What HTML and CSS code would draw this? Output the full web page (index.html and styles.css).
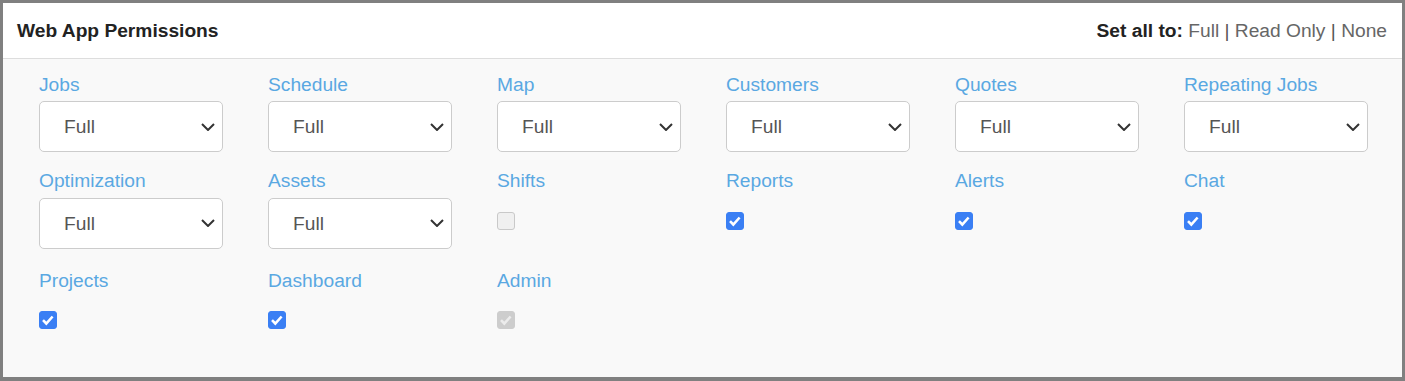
FILE: index.html
```html
<!DOCTYPE html>
<html lang="en">
<head>
    <meta charset="UTF-8">
    <meta name="viewport" content="width=device-width, initial-scale=1.0">
    <title>Web App Permissions</title>
    <link rel="stylesheet" href="styles.css">
</head>
<body>
    <div class="panel">
        <div class="panel-heading">
            <span class="panel-title">Web App Permissions</span>
            <span class="set-all"><b>Set all to:</b> <a href="#">Full</a> | <a href="#">Read Only</a> | <a href="#">None</a></span>
        </div>
        <div class="panel-body">
            <div class="perm">
                <label>Jobs</label>
                <select><option>Full</option><option>Read Only</option><option>None</option></select>
            </div>
            <div class="perm">
                <label>Schedule</label>
                <select><option>Full</option><option>Read Only</option><option>None</option></select>
            </div>
            <div class="perm">
                <label>Map</label>
                <select><option>Full</option><option>Read Only</option><option>None</option></select>
            </div>
            <div class="perm">
                <label>Customers</label>
                <select><option>Full</option><option>Read Only</option><option>None</option></select>
            </div>
            <div class="perm">
                <label>Quotes</label>
                <select><option>Full</option><option>Read Only</option><option>None</option></select>
            </div>
            <div class="perm">
                <label>Repeating Jobs</label>
                <select><option>Full</option><option>Read Only</option><option>None</option></select>
            </div>

            <div class="perm">
                <label>Optimization</label>
                <select><option>Full</option><option>Read Only</option><option>None</option></select>
            </div>
            <div class="perm">
                <label>Assets</label>
                <select><option>Full</option><option>Read Only</option><option>None</option></select>
            </div>
            <div class="perm">
                <label>Shifts</label>
                <div class="check"><input type="checkbox" disabled></div>
            </div>
            <div class="perm">
                <label>Reports</label>
                <div class="check"><input type="checkbox" checked></div>
            </div>
            <div class="perm">
                <label>Alerts</label>
                <div class="check"><input type="checkbox" checked></div>
            </div>
            <div class="perm">
                <label>Chat</label>
                <div class="check"><input type="checkbox" checked></div>
            </div>

            <div class="perm">
                <label>Projects</label>
                <div class="check"><input type="checkbox" checked></div>
            </div>
            <div class="perm">
                <label>Dashboard</label>
                <div class="check"><input type="checkbox" checked></div>
            </div>
            <div class="perm">
                <label>Admin</label>
                <div class="check"><input type="checkbox" checked disabled></div>
            </div>
        </div>
    </div>
</body>
</html>
```

FILE: styles.css
```css
html, body {
    margin: 0;
    height: 100%;
}
body {
    font-family: "Liberation Sans", Arial, sans-serif;
    font-size: 19.2px;
    line-height: 27.4px;
    color: #333;
}
.panel {
    box-sizing: border-box;
    height: 381px;
    border: 3px solid #808080;
    border-bottom-width: 4px;
    background: #f9f9f9;
}
.panel-heading {
    display: flex;
    justify-content: space-between;
    align-items: center;
    height: 55px;
    padding: 0 15px 0 14px;
    background: #fff;
    border-bottom: 1px solid #ddd;
}
.panel-title {
    font-weight: bold;
    color: #222;
}
.set-all {
    color: #555;
}
.set-all b {
    color: #222;
}
.set-all a {
    color: #666;
    text-decoration: none;
}

/* permission grid */
.panel-body {
    display: grid;
    grid-template-columns: repeat(6, 184px);
    column-gap: 45px;
    row-gap: 13px;
    padding: 10px 36px;
}
.perm label {
    display: block;
    padding-top: 2px;
    margin-bottom: 3px;
    color: #5aa8e2;
}
.perm select {
    display: block;
    box-sizing: border-box;
    width: 184px;
    height: 51px;
    padding: 0 30px 0 24px;
    font: inherit;
    color: #555;
    background: #fff url("data:image/svg+xml,%3Csvg xmlns='http://www.w3.org/2000/svg' width='14' height='8' viewBox='0 0 14 8'%3E%3Cpath d='M1 1l6 6 6-6' fill='none' stroke='%23333' stroke-width='2'/%3E%3C/svg%3E") no-repeat right 7px center;
    border: 1px solid #ccc;
    border-radius: 5px;
    appearance: none;
    -webkit-appearance: none;
    outline: none;
}
.check {
    padding: 14px 0 22px;
    height: 18px;
}
.check input {
    display: block;
    margin: 0;
    width: 18px;
    height: 18px;
    appearance: none;
    -webkit-appearance: none;
    border: 1px solid #c9c9c9;
    border-radius: 3px;
    background: #f0f0f0;
}
.check input:checked {
    border-color: #3a7ff4;
    background: #3a7ff4 url("data:image/svg+xml,%3Csvg xmlns='http://www.w3.org/2000/svg' width='18' height='18' viewBox='0 0 18 18'%3E%3Cpath d='M4 9.2l3.3 3.3 6.3-7' fill='none' stroke='%23fff' stroke-width='2.6'/%3E%3C/svg%3E") no-repeat center;
}
.check input:checked:disabled {
    border-color: #cdcdcd;
    background: #cdcdcd url("data:image/svg+xml,%3Csvg xmlns='http://www.w3.org/2000/svg' width='18' height='18' viewBox='0 0 18 18'%3E%3Cpath d='M4 9.2l3.3 3.3 6.3-7' fill='none' stroke='%23ececec' stroke-width='2.6'/%3E%3C/svg%3E") no-repeat center;
}
```
